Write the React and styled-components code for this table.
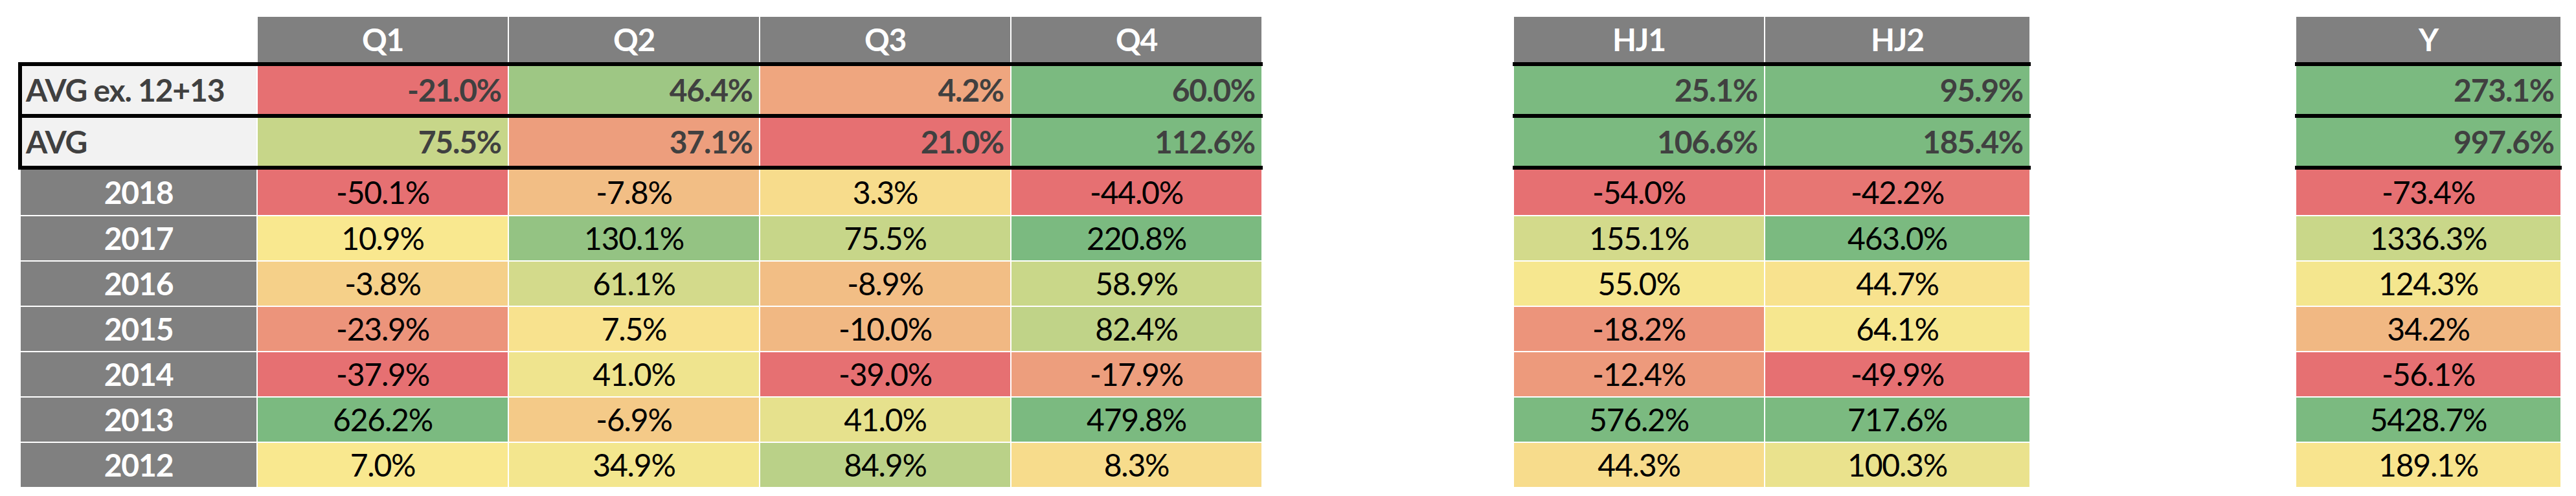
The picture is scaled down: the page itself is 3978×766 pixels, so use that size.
import styled, { createGlobalStyle } from 'styled-components';

const GlobalStyle = createGlobalStyle`
	body {
		margin: 0;
		background: #ffffff;
		font-family: Lato, 'Liberation Sans', sans-serif;
	}
`;

const RED = [230, 112, 114];
const YELLOW = [249, 232, 143];
const GREEN = [123, 186, 128];

// t runs from -1 (red) through 0 (yellow) to 1 (green)
function scaleColor(t) {
	const to = t < 0 ? RED : GREEN;
	const k = Math.abs(t);
	const c = YELLOW.map((v, i) => Math.round(v + (to[i] - v) * k));
	return `rgb(${c[0]}, ${c[1]}, ${c[2]})`;
}

const fmt = (v) => v.toFixed(1) + '%';

const groups = [
	{ key: 'q', heads: ['Q1', 'Q2', 'Q3', 'Q4'], widths: [386, 386, 386, 386], withLabels: true, skip: 0 },
	{ key: 'h', heads: ['HJ1', 'HJ2'], widths: [386, 408], skip: 386 },
	{ key: 'y', heads: ['Y'], widths: [408], skip: 408 },
];

const avgRows = [
	{
		label: 'AVG ex. 12+13',
		q: [[-21.0, -1], [46.4, 0.72], [4.2, -0.55], [60.0, 1]],
		h: [[25.1, 1], [95.9, 1]],
		y: [[273.1, 1]],
	},
	{
		label: 'AVG',
		q: [[75.5, 0.4], [37.1, -0.62], [21.0, -1], [112.6, 1]],
		h: [[106.6, 1], [185.4, 1]],
		y: [[997.6, 1]],
	},
];

const yearRows = [
	{
		label: '2018',
		q: [[-50.1, -1], [-7.8, -0.35], [3.3, -0.1], [-44.0, -1]],
		h: [[-54.0, -1], [-42.2, -0.95]],
		y: [[-73.4, -1]],
	},
	{
		label: '2017',
		q: [[10.9, 0], [130.1, 0.8], [75.5, 0.4], [220.8, 1]],
		h: [[155.1, 0.3], [463.0, 1]],
		y: [[1336.3, 0.38]],
	},
	{
		label: '2016',
		q: [[-3.8, -0.2], [61.1, 0.3], [-8.9, -0.35], [58.9, 0.38]],
		h: [[55.0, 0.02], [44.7, -0.05]],
		y: [[124.3, 0.04]],
	},
	{
		label: '2015',
		q: [[-23.9, -0.7], [7.5, -0.05], [-10.0, -0.4], [82.4, 0.45]],
		h: [[-18.2, -0.7], [64.1, 0.02]],
		y: [[34.2, -0.4]],
	},
	{
		label: '2014',
		q: [[-37.9, -1], [41.0, 0.08], [-39.0, -1], [-17.9, -0.62]],
		h: [[-12.4, -0.65], [-49.9, -1]],
		y: [[-56.1, -1]],
	},
	{
		label: '2013',
		q: [[626.2, 1], [-6.9, -0.25], [41.0, 0.15], [479.8, 1]],
		h: [[576.2, 1], [717.6, 1]],
		y: [[5428.7, 1]],
	},
	{
		label: '2012',
		q: [[7.0, 0], [34.9, 0.05], [84.9, 0.5], [8.3, -0.1]],
		h: [[44.3, -0.1], [100.3, 0.12]],
		y: [[189.1, -0.03]],
	},
];

const App = () => {
	return (
		<Page>
			<GlobalStyle />
			{groups.map((g) => (
				<Group key={g.key} $skip={g.skip}>
					<HeaderRow $labels={g.withLabels}>
						{g.withLabels && <Blank />}
						{g.heads.map((h, i) => (
							<HeadCell key={h} $w={g.widths[i]}>
								{h}
							</HeadCell>
						))}
					</HeaderRow>
					<AvgBlock $labels={g.withLabels}>
						{avgRows.map((r) => (
							<div key={r.label}>
								<Rule />
								<AvgRow $labels={g.withLabels}>
									{g.withLabels && <AvgLabel>{r.label}</AvgLabel>}
									{r[g.key].map(([v, t], i) => (
										<AvgValue key={i} $w={g.widths[i]} $bg={scaleColor(t)}>
											{fmt(v)}
										</AvgValue>
									))}
								</AvgRow>
							</div>
						))}
						<Rule />
					</AvgBlock>
					<DataRows>
						{yearRows.map((r) => (
							<DataRow key={r.label} $labels={g.withLabels}>
								{g.withLabels && <YearCell>{r.label}</YearCell>}
								{r[g.key].map(([v, t], i) => (
									<ValueCell key={i} $w={g.widths[i]} $bg={scaleColor(t)}>
										{fmt(v)}
									</ValueCell>
								))}
							</DataRow>
						))}
					</DataRows>
				</Group>
			))}
		</Page>
	);
};

let Page = styled.div`
	display: flex;
	align-items: flex-start;
	padding: 26px 0 0 28px;
	font-family: Lato, 'Liberation Sans', sans-serif;
`;

let Group = styled.div`
	display: flex;
	flex-direction: column;
	margin-left: ${(p) => p.$skip}px;
`;

let HeaderRow = styled.div`
	display: flex;
	gap: 2px;
	height: 70px;
	padding: ${(p) => (p.$labels ? '0 2px 0 0' : '0 2px')};
`;

let Blank = styled.div`
	width: 368px;
`;

let Text = styled.div`
	font-size: 48px;
	letter-spacing: -1.2px;
	line-height: 1;
	display: flex;
	align-items: center;
	white-space: nowrap;
	box-sizing: border-box;
`;

let HeadCell = styled(Text)`
	width: ${(p) => p.$w}px;
	background: #808080;
	color: #ffffff;
	font-weight: 700;
	justify-content: center;
`;

let AvgBlock = styled.div`
	display: flex;
	flex-direction: column;
	border-left: ${(p) => (p.$labels ? '6px solid #000000' : 'none')};
`;

let Rule = styled.div`
	height: 6px;
	background: #000000;
`;

let AvgRow = styled.div`
	display: flex;
	gap: 2px;
	height: 74px;
	padding: ${(p) => (p.$labels ? '0 2px 0 0' : '0 2px')};
`;

let AvgLabel = styled(Text)`
	width: 362px;
	padding-left: 6px;
	background: #f2f2f2;
	color: #404040;
	font-weight: 700;
`;

let AvgValue = styled(Text)`
	width: ${(p) => p.$w}px;
	padding-right: 10px;
	background: ${(p) => p.$bg};
	color: #404040;
	font-weight: 700;
	justify-content: flex-end;
`;

let DataRows = styled.div`
	display: flex;
	flex-direction: column;
	gap: 2px;
`;

let DataRow = styled.div`
	display: flex;
	gap: 2px;
	height: 68px;
	padding: ${(p) => (p.$labels ? '0 2px 0 4px' : '0 2px')};

	&:first-child {
		height: 70px;
	}
`;

let YearCell = styled(Text)`
	width: 364px;
	background: #808080;
	color: #ffffff;
	font-weight: 700;
	justify-content: center;
`;

let ValueCell = styled(Text)`
	width: ${(p) => p.$w}px;
	background: ${(p) => p.$bg};
	color: #000000;
	justify-content: center;
`;

export default App;
